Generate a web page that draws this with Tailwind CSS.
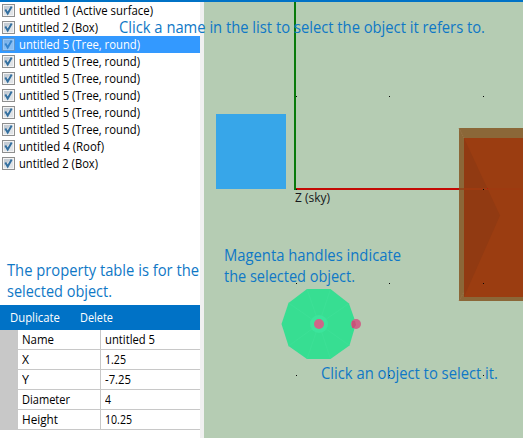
<!DOCTYPE html>
<html lang="en"><head><meta charset="utf-8"><title>Scene editor</title>
<script src="https://cdn.jsdelivr.net/npm/@tailwindcss/browser@4"></script></head>
<body class="w-[523px] h-[438px] overflow-hidden bg-white font-['Open_Sans','Noto_Sans',sans-serif] text-black">
<svg class="hidden"><defs><g id="check"><rect x=".5" y=".5" width="12" height="12" fill="#f4f4f4" stroke="#8e8f8f"/><path d="M2 2h9v9H2z" fill="#dfe3e7"/><path d="M2 2h7L2 9z" fill="#c4ccd4"/><path d="M3.300 5.500l2.400 4L9.700 2.500" fill="none" stroke="#336f9f" stroke-width="2"/></g></defs></svg>
<div class="relative flex h-full flex-col border-t-2 border-[#0072c6]">
 <main class="flex flex-1">
  <aside class="flex w-[200px] flex-col">
   <ul id="list" class="h-[303px] text-[12px] leading-[17px]"></ul>
   <nav class="flex h-[25px] items-center gap-[16px] bg-[#0072c6] pl-[10px] text-[12px] text-white">
    <button><svg class="block h-[25px] w-[54px] overflow-visible"><text x="0" y="17" textLength="50" lengthAdjust="spacingAndGlyphs" fill="white">Duplicate</text></svg></button>
    <button><svg class="block h-[25px] w-[38px] overflow-visible"><text x="0" y="17" textLength="33" lengthAdjust="spacingAndGlyphs" fill="white">Delete</text></svg></button>
   </nav>
   <div id="props" class="border-l-[18px] border-[#c8c8c8] text-[12px]"></div>
  </aside>
  <div class="w-[4px] bg-[#f0f0f0]"></div>
  <section class="w-[319px] bg-[#b5ccb3]">
   <svg class="block" width="319" height="436" viewBox="204 2 319 436">
    <rect x="216" y="114" width="70" height="75" fill="#37a6e9"/>
    <path d="M294 2h2v188h-2z" fill="#087a0b"/><path d="M296 188h163v2H296z" fill="#c40a05"/>
    <path d="M459 128h64v173h-64z" fill="#8b6738"/><path d="M464 138h59v159h-59z" fill="#9b3d11"/>
    <path d="M464 138l36 77.500-36 81.500z" fill="#913a12"/>
    <path d="M459 188h5v2h-5z" fill="#8f4a1f"/><path d="M464 188h59v2h-59z" fill="#9e3a10"/><rect x="487" y="188" width="1" height="1" fill="#b31b0a"/>
    <path d="M459 128l5 10M459 301l5-9" stroke="#9d754b" stroke-dasharray="1 1"/>
    <path d="M307 289h23.500l18.500 14.500 7 20-6.500 22-19 13.500H307l-18.500-13-7-22 7-21z" fill="#37de92"/>
    <path d="M319 324l-12-35M319 324l11.500-35M319 324l30-20.500M319 324l30.500 21.500M319 324l11.500 35M319 324l-12 35M319 324l-30.500 22M319 324l-30.500-21" stroke="#3fe098" stroke-width=".6"/>
    <circle cx="319" cy="324" r="9" fill="#3ce49c"/><circle cx="319" cy="324" r="5" fill="#ce6588"/><circle cx="356" cy="324" r="5" fill="#ce6588"/><path d="M352 321l3 0 1 4-2 3h-2z" fill="#c75379"/>
    <path d="M296 96h1v1h-1zM389 96h1v1h-1zM483 96h1v1h-1zM296 189h1v1h-1zM483 189h1v1h-1zM296 283h1v1h-1zM389 283h1v1h-1zM483 283h1v1h-1zM296 375h1v1h-1zM389 375h1v1h-1zM483 375h1v1h-1z" fill="#080808"/>
    <text x="295" y="202" font-size="12" textLength="35" lengthAdjust="spacingAndGlyphs" fill="#16181b">Z (sky)</text>
   </svg>
  </section>
 </main>
 <svg class="pointer-events-none absolute left-0 top-[-2px] text-[16px]" width="523" height="438" fill="#0f78c6">
  <text x="119" y="33" textLength="366" lengthAdjust="spacingAndGlyphs">Click a name in the list to select the object it refers to.</text>
  <text x="7" y="276" textLength="192" lengthAdjust="spacingAndGlyphs">The property table is for the</text>
  <text x="7" y="297" textLength="105" lengthAdjust="spacingAndGlyphs">selected object.</text>
  <text x="224" y="261" textLength="177" lengthAdjust="spacingAndGlyphs">Magenta handles indicate</text>
  <text x="224" y="282" textLength="131" lengthAdjust="spacingAndGlyphs">the selected object.</text>
  <text x="321" y="379" textLength="177" lengthAdjust="spacingAndGlyphs">Click an object to select it.</text>
 </svg>
</div>
<script>
const items=[['untitled 1 (Active surface)',134],['untitled 2 (Box)',79],['untitled 5 (Tree, round)',121],['untitled 5 (Tree, round)',121],['untitled 5 (Tree, round)',121],['untitled 5 (Tree, round)',121],['untitled 5 (Tree, round)',121],['untitled 5 (Tree, round)',121],['untitled 4 (Roof)',85],['untitled 2 (Box)',79]];
const label=(t,w,y)=>`<text y="${y}" textLength="${w}" lengthAdjust="spacingAndGlyphs" fill="currentColor">${t}</text>`;
document.getElementById('list').innerHTML=items.map(([t,w],i)=>`<li class="flex h-[17px] gap-[4px] pl-[2px] ${i===2?'bg-[#3399ff] text-white':''}"><svg class="mt-[2px] h-[13px] w-[13px] shrink-0"><use href="#check"/>${i===2?'<rect width="13" height="13" fill="#3399ff" fill-opacity=".5"/>':''}</svg><svg class="h-[17px] w-[170px]">${label(t,w,13)}</svg></li>`).join('');
const props=[['Name',32,'untitled 5',50],['X',7,'1.25',21],['Y',7,'-7.25',26],['Diameter',48,'4',6],['Height',36,'10.25',27]];
document.getElementById('props').innerHTML=props.map(([a,aw,b,bw])=>`<div class="flex h-[20px] border-b border-[#c8c8c8]"><div class="w-[83px] border-r border-[#c8c8c8] pl-[4px]"><svg class="block h-[19px] w-[76px]">${label(a,aw,14)}</svg></div><div class="pl-[4px]"><svg class="block h-[19px] w-[80px]">${label(b,bw,14)}</svg></div></div>`).join('');
</script>
</body></html>
